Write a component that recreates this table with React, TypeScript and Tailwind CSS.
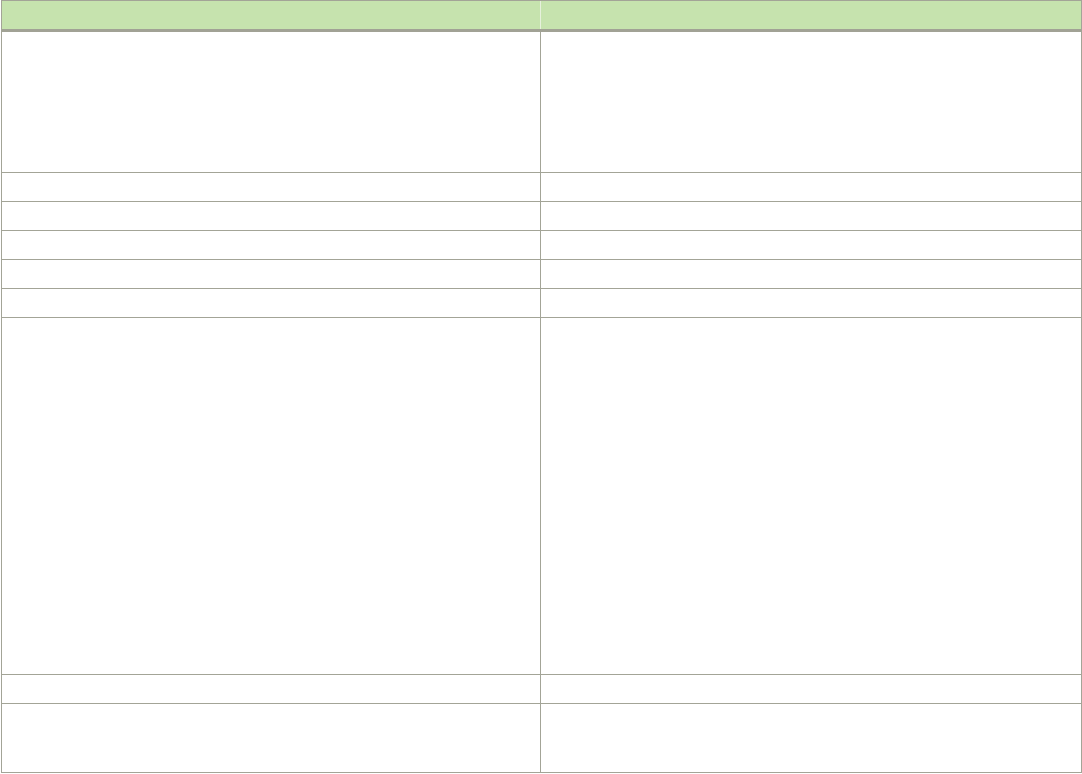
const rows: number[] = [140, 28, 28, 28, 28, 28, 356, 28, 68];

export default function App() {
  return (
    <div className="w-[1082px] h-[774px] bg-white font-['Liberation_Sans',sans-serif]">
      <div className="ml-px w-[1081px] border border-[#a3a497]">
        <div className="flex h-[31px] bg-[#c6e3ae] border-b-[3px] border-[#a1a295]">
          <div className="w-[539px] border-r border-[#e6f1dc]" />
          <div className="flex-1" />
        </div>
        {rows.map((h, i) => (
          <div
            key={i}
            className={`flex ${i < rows.length - 1 ? "border-b border-[#a3a497]" : ""}`}
            style={{ height: i < rows.length - 1 ? h + 1 : h }}
          >
            <div className="w-[539px] border-r border-[#a3a497]" />
            <div className="flex-1" />
          </div>
        ))}
      </div>
    </div>
  );
}
